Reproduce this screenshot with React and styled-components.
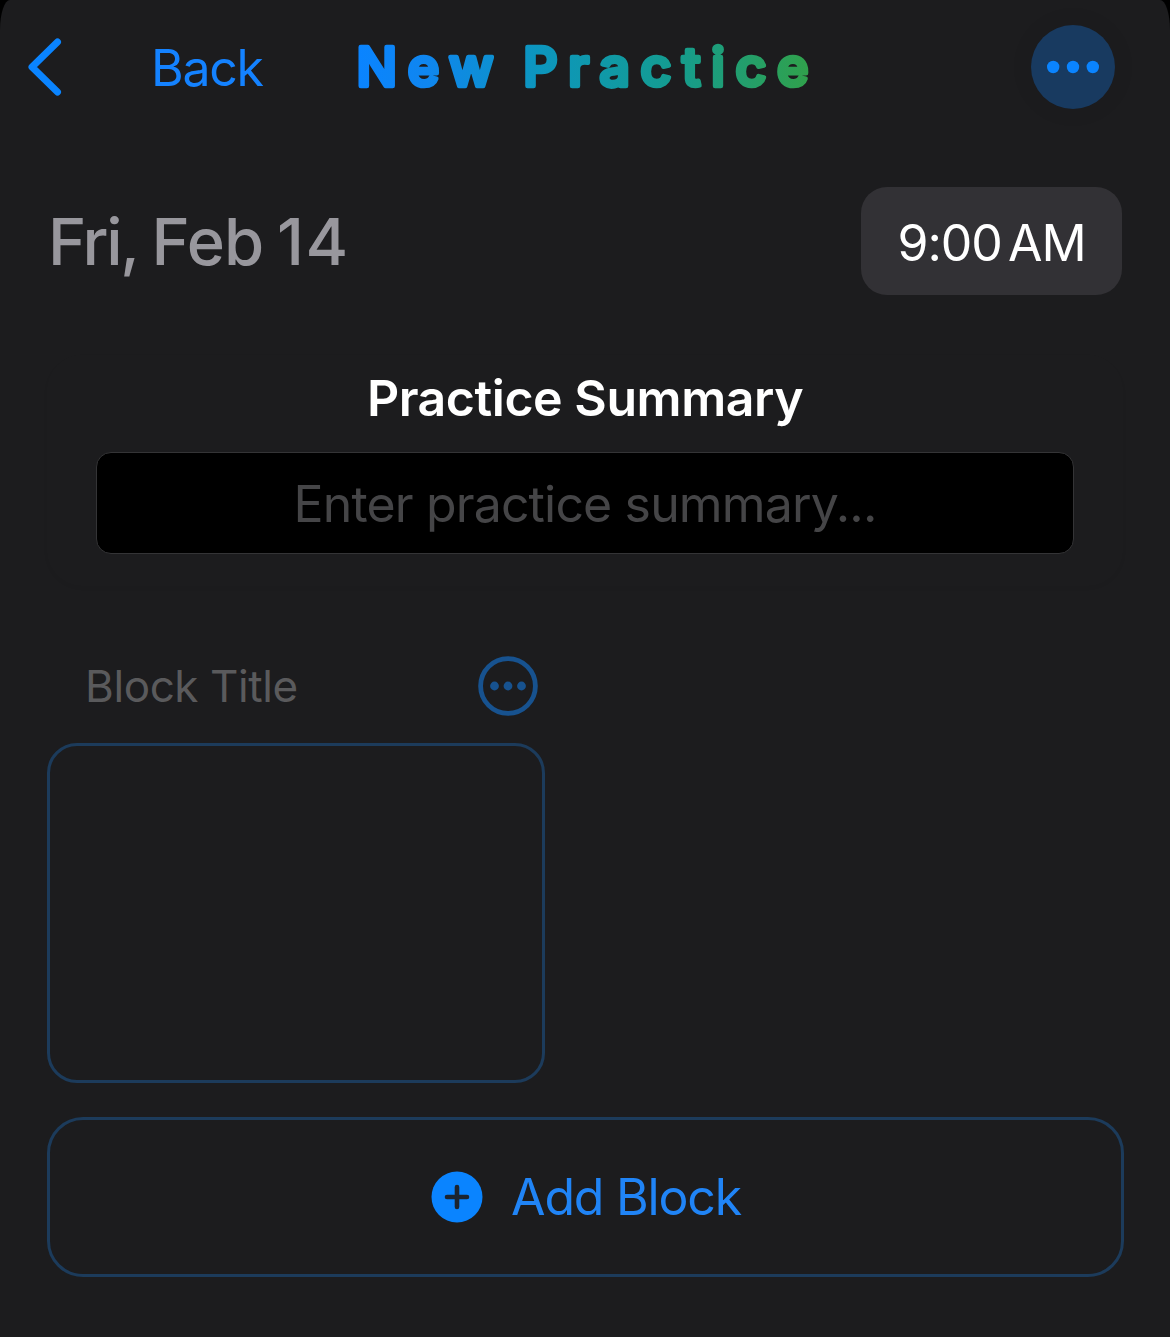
import React from "react";
import styled, { createGlobalStyle } from "styled-components";

const Global = createGlobalStyle`
  *, *::before, *::after { box-sizing: border-box; }
  body { margin: 0; background: #000; }
  button, input { font: inherit; color: inherit; background: none; border: 0; padding: 0; margin: 0; }
`;

const Screen = styled.main`
  width: 1170px;
  height: 1337px;
  overflow: hidden;
  display: flex;
  flex-direction: column;
  padding: 0 47px;
  background: #1c1c1e;
  border-radius: 10px 10px 0 0 / 30px 30px 0 0;
  font-family: Inter, "Liberation Sans", sans-serif;
`;

const NavBar = styled.header`
  height: 134px;
  margin: 0 8px 0 -20px;
  display: flex;
  align-items: center;
  flex-shrink: 0;
`;

const BackButton = styled.button`
  display: flex;
  align-items: center;
  gap: 88px;
  width: 325px;
  color: #1482ff;
`;

const Label = styled.span`
  font-size: ${(p) => p.$size}px;
  font-weight: ${(p) => p.$weight || 400};
  letter-spacing: ${(p) => p.$track || 0}px;
  word-spacing: ${(p) => p.$word || 0}px;
  padding-top: ${(p) => p.$drop || 0}px;
  line-height: 1.2;
  white-space: nowrap;
  color: ${(p) => p.$color};
`;

const Title = styled.h1`
  margin: 0;
  display: flex;
  flex: 1;
`;

const MenuButton = styled.button`
  width: 84px;
  height: 84px;
  border-radius: 50%;
  background: #183a60;
  box-shadow: 0 0 24px rgba(0, 0, 0, 0.07);
  display: flex;
  align-items: center;
  justify-content: center;
`;

const DateRow = styled.section`
  display: flex;
  align-items: center;
  justify-content: space-between;
  margin-top: 53px;
  padding: 0 1px 0 1px;
  height: 108px;
  flex-shrink: 0;
`;

const DateText = styled.div`
  display: flex;
  align-items: center;
  gap: 13.5px;
`;

const TimeButton = styled.button`
  width: 261px;
  height: 108px;
  border-radius: 26px;
  background: #323135;
  display: flex;
  align-items: center;
  justify-content: center;
`;

const SummaryCard = styled.section`
  margin-top: 60px;
  height: 231px;
  padding: 13px 49px 0;
  border-radius: 36px;
  display: flex;
  flex-direction: column;
  align-items: center;
  box-shadow: 0 2px 10px -4px rgba(0, 0, 0, 0.06);
  flex-shrink: 0;
`;

const CardHeading = styled.h2`
  margin: 0;
  display: flex;
  height: 60px;
`;

const SummaryField = styled.div`
  margin-top: 24px;
  width: 978px;
  height: 102px;
  border: 1px solid #343436;
  border-radius: 15px;
  background: #000;
  display: flex;
  align-items: center;
  justify-content: center;
`;

const Block = styled.section`
  margin-top: 70px;
  width: 498px;
  flex-shrink: 0;
`;

const BlockHeader = styled.div`
  height: 60px;
  padding: 0 7px 0 38px;
  display: flex;
  align-items: center;
  justify-content: space-between;
`;

const IconButton = styled.button`
  display: flex;
`;

const BlockBody = styled.div`
  margin-top: 27px;
  height: 340px;
  border: 3px solid #1c3b5b;
  border-radius: 30px;
`;

const AddButton = styled.button`
  margin-top: 34px;
  width: 1077px;
  height: 160px;
  padding-left: 1px;
  border: 3px solid #1c3b5b;
  border-radius: 36px;
  display: flex;
  align-items: center;
  justify-content: center;
  gap: 28px;
  flex-shrink: 0;
`;

const Chevron = () => (
  <svg width="36" height="60" viewBox="0 0 36 60" fill="none">
    <path d="M30.5 5 L5 30 L30.5 55" stroke="#0a84ff" strokeWidth="7" strokeLinecap="round" strokeLinejoin="round" />
  </svg>
);

const TitleText = () => (
  <svg width="470" height="80" viewBox="0 0 470 80">
    <defs>
      <linearGradient id="titleFill" gradientUnits="userSpaceOnUse" x1="6" y1="0" x2="456" y2="0">
        <stop offset="0" stopColor="#0a84ff" />
        <stop offset="0.15" stopColor="#0f86f0" />
        <stop offset="0.4" stopColor="#0c96be" />
        <stop offset="0.7" stopColor="#149c90" />
        <stop offset="1" stopColor="#30a14c" />
      </linearGradient>
    </defs>
    <text
      x="4.5" y="59" textLength="452" lengthAdjust="spacing" wordSpacing="-6"
      fontFamily="Inter, sans-serif" fontSize="53.5" fontWeight="500"
      fill="url(#titleFill)" stroke="url(#titleFill)" strokeWidth="4.6" strokeLinejoin="round"
    >New Practice</text>
  </svg>
);

const Dots = () => (
  <svg width="54" height="14" viewBox="0 0 54 14" fill="#0a84ff">
    <circle cx="7.2" cy="7" r="6.2" />
    <circle cx="27" cy="7" r="6.2" />
    <circle cx="46.8" cy="7" r="6.2" />
  </svg>
);

const CircledDots = () => (
  <svg width="60" height="60" viewBox="0 0 60 60" fill="#17528f">
    <circle cx="30" cy="30" r="27.4" fill="none" stroke="#17528f" strokeWidth="4.8" />
    <circle cx="16.5" cy="30" r="4.4" />
    <circle cx="30" cy="30" r="4.4" />
    <circle cx="43.5" cy="30" r="4.4" />
  </svg>
);

const PlusCircle = () => (
  <svg width="52" height="52" viewBox="0 0 52 52">
    <circle cx="26" cy="26" r="25.5" fill="#0a84ff" />
    <path d="M26 16 V36 M16 26 H36" stroke="#1b2430" strokeWidth="4.6" strokeLinecap="round" />
  </svg>
);

export default function App() {
  const date = { $size: 65, $weight: 500, $color: "#98979d", $drop: 1 };
  return (
    <>
      <Global />
      <Screen>
        <NavBar>
          <BackButton>
            <Chevron />
            <Label $size={50} $track={-1.3} $drop={1}>Back</Label>
          </BackButton>
          <Title><TitleText /></Title>
          <MenuButton aria-label="More"><Dots /></MenuButton>
        </NavBar>
        <DateRow>
          <DateText>
            <Label {...date} $track={-2.2}>Fri,</Label>
            <Label {...date} $track={-0.7}>Feb</Label>
            <Label {...date} $track={1.5}>14</Label>
          </DateText>
          <TimeButton>
            <Label $size={50} $track={-1} $word={-7} $drop={3} $color="#fff">9:00 AM</Label>
          </TimeButton>
        </DateRow>
        <SummaryCard>
          <CardHeading>
            <Label $size={50} $weight={600} $track={-0.45} $color="#fff">Practice Summary</Label>
          </CardHeading>
          <SummaryField>
            <Label $size={50} $track={-0.85} $drop={2} $color="#454547">Enter practice summary...</Label>
          </SummaryField>
        </SummaryCard>
        <Block>
          <BlockHeader>
            <Label $size={44} $track={-0.4} $color="#5a5a5c">Block Title</Label>
            <IconButton aria-label="Block options"><CircledDots /></IconButton>
          </BlockHeader>
          <BlockBody />
        </Block>
        <AddButton>
          <PlusCircle />
          <Label $size={50} $track={-1.2} $color="#2084f6">Add Block</Label>
        </AddButton>
      </Screen>
    </>
  );
}
